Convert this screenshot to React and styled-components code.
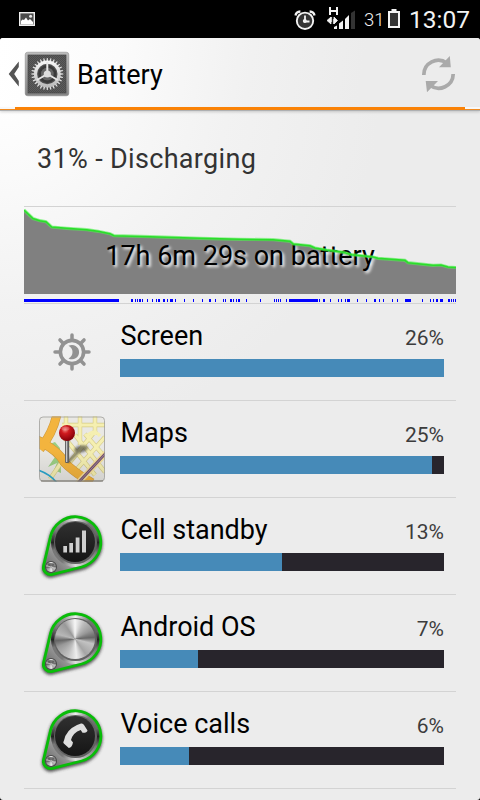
import React from "react";
import styled, { createGlobalStyle } from "styled-components";

const GlobalStyle = createGlobalStyle`
  html, body { margin: 0; background: #000; }
  body { font-family: Roboto, "Liberation Sans", sans-serif; }
  svg { display: block; flex: none; }
`;

const Phone = styled.div`
  width: 480px;
  height: 800px;
  display: flex;
  flex-direction: column;
  overflow: hidden;
  background: #000;
`;

const StatusBar = styled.header`
  height: 38px;
  flex: none;
  display: flex;
  align-items: center;
  background: #000;
  color: #f3f3f3;
  padding: 0 9px 0 18px;
`;

const StatusIcons = styled.div`
  display: flex;
  align-items: center;
  margin-left: auto;
`;

const BatteryLevel = styled.span`
  font-size: 18.5px;
  line-height: 38px;
  font-weight: 300;
  width: 24px;
  margin-left: 9px;
  padding-top: 1px;
  box-sizing: border-box;
`;

const Clock = styled.time`
  font-size: 24.5px;
  line-height: 38px;
  width: 62px;
  margin-left: 9px;
  padding-top: 1px;
  box-sizing: border-box;
`;

const Screen = styled.div`
  flex: 1;
  display: flex;
  flex-direction: column;
  border-radius: 3px;
  overflow: hidden;
  background: radial-gradient(ellipse 380px 360px at 0 50px, #ffffff 0%, #fafafa 25%, #f2f2f2 60%, #ececec 100%);
`;

const ActionBar = styled.div`
  height: 69px;
  box-sizing: border-box;
  flex: none;
  display: flex;
  align-items: center;
  background: linear-gradient(98deg, #ffffff 0%, #fbfbfb 25%, #f1f1f1 52%, #ececec 75%);
  padding: 3px 24px 0 8px;
`;

const Title = styled.h1`
  margin: 2px 0 0 7px;
  font-size: 27px;
  line-height: 36px;
  font-weight: 400;
  color: #000;
  flex: 1;
`;

const Accent = styled.div`
  height: 3px;
  flex: none;
  box-sizing: border-box;
  padding: 0 15px;
  background: linear-gradient(#f8f8f8 0 2px, #f08a20 2px 3px);
  box-shadow: 0 1px 0 #aeb0b2, 0 2px 3px rgba(0, 0, 0, 0.18);
`;

const AccentLine = styled.div`
  height: 3px;
  background: #fa8206;
`;

const Content = styled.main`
  padding: 0 24px;
`;

const Summary = styled.div`
  height: 96px;
  box-sizing: border-box;
  border-bottom: 1px solid #d3d3d3;
  padding: 30px 0 0 13px;
  margin-top: 1px;
  font-size: 27px;
  letter-spacing: 0.33px;
  line-height: 36px;
  color: #333;
`;

const ChartPanel = styled.div`
  position: relative;
  height: 97px;
  box-sizing: border-box;
  border-bottom: 1px solid #d3d3d3;
`;

const ChartLayer = styled.svg`
  position: absolute;
  left: 0;
  top: 0;
`;

const ChartLabel = styled.div`
  position: absolute;
  left: 0;
  right: 0;
  top: 31px;
  text-align: center;
  font-size: 27px;
  line-height: 36px;
  color: #000;
  text-shadow: 2px 2px 3px #fff;
`;

const Row = styled.div`
  height: 97px;
  box-sizing: border-box;
  display: flex;
  padding: 7px 12px 0 6px;
  border-bottom: 1px solid #d3d3d3;
`;

const RowBody = styled.div`
  flex: 1;
  padding-top: 7px;
`;

const RowHeader = styled.div`
  display: flex;
  justify-content: space-between;
  align-items: baseline;
  height: 41px;
`;

const RowName = styled.span`
  font-size: 27px;
  line-height: 36px;
  padding-left: 0.5px;
  color: #000;
`;

const RowPercent = styled.span`
  font-size: 21px;
  line-height: 28px;
  font-weight: 400;
  color: #3c3c3c;
`;

const Track = styled.div`
  height: 18px;
  background: #28252c;
`;

const Fill = styled.div`
  height: 18px;
  width: ${(p) => p.$width}px;
  background: #468ab8;
`;

const curve =
  "M24 210 L33 218.5 L40 220.7 L46 221.7 L51.7 227 L66.7 228.3 L86.7 229.7 L98 231.3 L110 233.7 L114 235.7 L150 236.7 L200 238.3 L240 239.3 L273 239.7 L290 241.3 L293.3 244 L310 245.7 L315 248 L326.7 250 L343.3 252.3 L351.7 254.7 L373.3 257 L378 258.3 L405 260.3 L408 262.7 L433 265.3 L441 265 L448 267 L456 267.5";

const awake = [
  [24, 95], [131, 2], [135, 1], [137, 1], [139, 2], [142, 1], [147, 1], [152, 1], [156, 1], [158, 2],
  [163, 2], [167, 1], [170, 3], [175, 1], [184, 1], [193, 1], [202, 1], [209, 2], [215, 1], [223, 1],
  [225, 1], [230, 2], [233, 1], [236, 1], [238, 2], [246, 1], [260, 1], [274, 1], [276, 1], [278, 1],
  [280, 1], [286, 1], [289, 29], [319, 1], [323, 2], [330, 1], [338, 1], [341, 1], [345, 1], [347, 3],
  [357, 1], [366, 1], [374, 2], [379, 1], [383, 1], [392, 1], [397, 1], [405, 6], [422, 1], [430, 1],
  [433, 1], [436, 2], [440, 3], [448, 2], [451, 1], [453, 1], [455, 1],
];

function Chart() {
  return (
    <ChartPanel>
      <ChartLayer width="432" height="96" viewBox="24 207 432 96">
        <path d={`${curve} V294 H24 Z`} fill="#808080" />
        {awake.map(([x, w]) => (
          <rect key={x} x={x} y="299" width={w} height="3" fill="#0000ff" shapeRendering="crispEdges" />
        ))}
      </ChartLayer>
      <ChartLabel>17h 6m 29s on battery</ChartLabel>
      <ChartLayer width="432" height="96" viewBox="24 207 432 96">
        <path d={curve} fill="none" stroke="#50f050" strokeOpacity="0.6" strokeWidth="3.2" />
        <path d={curve} fill="none" stroke="#2ade2a" strokeWidth="1.5" />
      </ChartLayer>
    </ChartPanel>
  );
}

const PictureSvg = styled.svg`
  margin-top: 2px;
`;

function PictureIcon() {
  return (
    <PictureSvg width="18" height="16" viewBox="18 12 18 16">
      <rect x="19.7" y="12.7" width="14.6" height="12.6" fill="#4b4b4b" stroke="#f0f0f0" strokeWidth="1.4" />
      <path d="M21 24.5 V21 L22.5 19.5 L24 20 L26 17.5 L28 20.5 L30 19 L33 22 V24.5 Z" fill="#fff" />
      <circle cx="30.6" cy="16.3" r="1.5" fill="#e8e8e8" />
    </PictureSvg>
  );
}

function AlarmIcon() {
  return (
    <svg width="22" height="22" viewBox="294 9 22 22">
      <path d="M295.5 15.5 Q296 11.8 300.4 11.5 M309.6 11.5 Q314 11.8 314.5 15.5" stroke="#f3f3f3" strokeWidth="2.3" fill="none" />
      <circle cx="305" cy="20.8" r="8.2" fill="#343434" stroke="#f3f3f3" strokeWidth="1.9" />
      <path d="M305 15.5 V21.5 H309.5" stroke="#f3f3f3" strokeWidth="1.8" fill="none" />
      <circle cx="304.8" cy="21" r="2" fill="#f3f3f3" />
    </svg>
  );
}

const SignalSvg = styled.svg`
  margin-top: -2px;
`;

function SignalIcon() {
  return (
    <SignalSvg width="29" height="24" viewBox="326 6 29 24">
      <path d="M330 7 V15 M337 7 V15 M330 11 H337" stroke="#f3f3f3" strokeWidth="2" fill="none" />
      <path d="M327 20.5 L331 17 V24 Z M337.5 20.5 L334 17 V24 Z M331.6 17 V22 M333.4 19 V24" stroke="#f3f3f3" strokeWidth="0.8" fill="#f3f3f3" />
      <path d="M334 29 V27 L337 25.5 V29 Z M339 29 V23.5 L343 20.5 V29 Z M345 29 V19 L349 15 V29 Z" fill="#f3f3f3" />
      <path d="M351 29 V13 L355 10.5 V29 Z" fill="#333" />
    </SignalSvg>
  );
}

function BatteryIcon() {
  return (
    <svg width="12" height="20" viewBox="388 10 12 20">
      <path d="M391.5 10 H396.5 V12 H400 V29 H388 V12 H391.5 Z" fill="#f3f3f3" />
      <rect x="390" y="14" width="8" height="13" fill="#333" />
    </svg>
  );
}

const SettingsSvg = styled.svg`
  margin-left: 5px;
`;

function SettingsIcon() {
  const teeth = Array.from({ length: 28 }, (_, i) => (i * 360) / 28);
  return (
    <SettingsSvg width="46" height="46" viewBox="24 51 46 46">
      <defs>
        <linearGradient id="frame" x1="0" y1="0" x2="0" y2="1">
          <stop offset="0" stopColor="#bcbcbc" />
          <stop offset="1" stopColor="#858585" />
        </linearGradient>
        <linearGradient id="gear" x1="0" y1="0" x2="0" y2="1">
          <stop offset="0" stopColor="#f5f5f5" />
          <stop offset="1" stopColor="#bdbdbd" />
        </linearGradient>
        <pattern id="mesh" width="2" height="2" patternUnits="userSpaceOnUse">
          <rect width="2" height="2" fill="#5c5c5c" />
          <rect width="1" height="1" fill="#4c4c4c" />
          <rect x="1" y="1" width="1" height="1" fill="#4c4c4c" />
        </pattern>
      </defs>
      <rect x="25.2" y="52.2" width="43.6" height="43.6" rx="2.5" fill="url(#frame)" stroke="#808080" strokeWidth="0.5" />
      <rect x="28" y="55" width="38" height="38" fill="url(#mesh)" stroke="#484848" strokeWidth="0.7" />
      <circle cx="47.3" cy="74" r="13" fill="#505050" />
      {teeth.map((a) => (
        <path key={a} d="M46.4 62 L46.8 58 H47.8 L48.2 62 Z" fill="#e0e0e0" transform={`rotate(${a} 47.3 74)`} />
      ))}
      <circle cx="47.3" cy="74" r="11.8" fill="none" stroke="url(#gear)" strokeWidth="3.2" />
      <circle cx="47.3" cy="74" r="7.6" fill="none" stroke="#3a3a3a" strokeWidth="2.6" />
      <circle cx="47.3" cy="74" r="6.3" fill="#666" />
      <path d="M47.3 62 V74 L37 80 M47.3 74 L57.6 80" stroke="#e7e7e7" strokeWidth="2" fill="none" />
      <circle cx="47.3" cy="74" r="3.6" fill="#dedede" />
    </SettingsSvg>
  );
}

function RefreshIcon() {
  return (
    <svg width="36" height="38" viewBox="420 55 36 38">
      <path d="M423.8 75 A14.5 14.5 0 0 1 447 63.2 M453.2 74 A14.5 14.5 0 0 1 430 85.3" fill="none" stroke="#aaa" strokeWidth="3.7" />
      <path d="M449.8 56 L450.8 67.2 H439 Z M425.7 81 H438 L427 92.2 Z" fill="#aaa" />
    </svg>
  );
}

function BrightnessIcon() {
  return (
    <svg width="90" height="88" viewBox="0 0 90 88">
      <g stroke="#929292" fill="none">
        <circle cx="42" cy="41" r="11.6" strokeWidth="3.6" />
        {[0, 45, 90, 135, 180, 225, 270, 315].map((a) => (
          <path key={a} d="M42 28.5 V24" strokeWidth="3.5" strokeLinecap="round" transform={`rotate(${a} 42 41)`} />
        ))}
      </g>
      <path d="M38.5 34.8 A7.2 7.2 0 1 1 38.5 47.5 Q42.5 45 42.5 41 Q42.5 37 38.5 34.8 Z" fill="#929292" />
    </svg>
  );
}

function MapsIcon() {
  return (
    <svg width="90" height="88" viewBox="0 3 90 88">
      <defs>
        <clipPath id="mapClip"><rect x="9" y="11.5" width="66" height="65" rx="4" /></clipPath>
        <radialGradient id="pin" cx="0.38" cy="0.3" r="0.7">
          <stop offset="0" stopColor="#f08078" />
          <stop offset="0.35" stopColor="#cf1a1e" />
          <stop offset="1" stopColor="#850008" />
        </radialGradient>
        <linearGradient id="mapShade" x1="0" y1="0" x2="0" y2="1">
          <stop offset="0.5" stopColor="#000" stopOpacity="0" />
          <stop offset="1" stopColor="#000" stopOpacity="0.1" />
        </linearGradient>
        <filter id="pinShade"><feGaussianBlur stdDeviation="1" /></filter>
      </defs>
      <g clipPath="url(#mapClip)" fill="none">
        <rect x="9" y="11" width="66" height="66" fill="#e9e8e4" />
        <path d="M17 40 L25 37 L30 43 L31 68 L24 65 L27 58 L18 62 L25 52 Z" fill="#9bce84" />
        <g stroke="#d4ca87" strokeWidth="4.4">
          <path d="M32 20 H75 M36 11 V36 M50 11 V40 M65 11 V30 M34 32 L65 70 M45 30 L75 67 M55 29 L75 52 M40 57 L66 25 M47 64 L75 32 M20 74 L35 52" />
        </g>
        <g stroke="#f5efb1" strokeWidth="3.2">
          <path d="M32 20 H75 M36 11 V36 M50 11 V40 M65 11 V30 M34 32 L65 70 M45 30 L75 67 M55 29 L75 52 M40 57 L66 25 M47 64 L75 32 M20 74 L35 52" />
          <path d="M57 31 Q64 23 70 31" />
        </g>
        <path d="M27 9 Q23 28 10 44 M5 34 Q28 45 34 57 Q42 66 62 78" stroke="#cf9a3d" strokeWidth="9.2" />
        <path d="M27 9 Q23 28 10 44 M5 34 Q28 45 34 57 Q42 66 62 78" stroke="#f3b43e" strokeWidth="8" />
        <path d="M47 79 L76 48" stroke="#f5df9b" strokeWidth="6" />
        <path d="M47 79 L76 48" stroke="#74506f" strokeWidth="2.8" />
        <path d="M47 79 L76 48" stroke="#ad98a5" strokeWidth="0.8" />
        <path d="M8 65 Q20 69 27 78" stroke="#2aa7cf" strokeWidth="1.8" />
        <rect x="9" y="11" width="66" height="66" fill="url(#mapShade)" />
      </g>
      <rect x="9.5" y="12" width="65" height="64" rx="3.5" fill="none" stroke="#9b9b98" strokeOpacity="0.75" />
      <path d="M11 76 H73" stroke="#77736b" strokeWidth="1" />
      <g filter="url(#pinShade)" opacity="0.55">
        <path d="M38 57 L49 46" stroke="#222" strokeWidth="3" />
        <ellipse cx="51" cy="44" rx="7" ry="3.5" fill="#222" transform="rotate(-12 51 44)" />
      </g>
      <rect x="35" y="34" width="4.2" height="24" rx="1.5" fill="#5e5e5e" />
      <path d="M36.6 35 V57" stroke="#c8c8c8" strokeWidth="1.4" />
      <circle cx="37" cy="28" r="8" fill="url(#pin)" />
      <ellipse cx="35.5" cy="23.5" rx="4" ry="2" fill="#fff" opacity="0.2" />
    </svg>
  );
}

const KnobBox = styled.div`
  position: relative;
  width: 90px;
  height: 88px;
  flex: none;
`;

const KnobLayer = styled.svg`
  position: absolute;
  left: 0;
  top: 0;
`;

const Disc = styled.div`
  position: absolute;
  left: ${(p) => p.$x - p.$r}px;
  top: ${(p) => p.$y - p.$r}px;
  width: ${(p) => p.$r * 2}px;
  height: ${(p) => p.$r * 2}px;
  border-radius: 50%;
  background: ${(p) => p.$fill};
`;

const ring = "conic-gradient(#eee, #777 35deg, #666 70deg, #222 90deg, #777 115deg, #aaa 150deg, #ddd 180deg, #777 215deg, #777 250deg, #222 270deg, #777 300deg, #999 330deg, #eee)";
const brushed = "conic-gradient(#f6f6f6, #bbb 30deg, #999 60deg, #686868 85deg, #c3c3c3 105deg, #a5a5a5 145deg, #ededed 175deg, #c0c0c0 205deg, #999 245deg, #666 265deg, #b7b7b7 285deg, #999 325deg, #f6f6f6)";
const teardrop = "M20.5 31.5 A25.5 25.5 0 1 1 51.6 62 L22.5 69.4 A7.3 7.3 0 0 1 13.6 60.6 Z";

function Knob({ kind }) {
  return (
    <KnobBox>
      <KnobLayer width="90" height="88" viewBox="0 0 90 88">
        <defs>
          <filter id="knobShade" x="-20%" y="-20%" width="140%" height="140%"><feGaussianBlur stdDeviation="1.8" /></filter>
          <linearGradient id="plate" x1="1" y1="0" x2="0" y2="1">
            <stop offset="0" stopColor="#888" />
            <stop offset="0.7" stopColor="#999" />
            <stop offset="1" stopColor="#555" />
          </linearGradient>
        </defs>
        <path d={teardrop} transform="translate(0 1.5)" fill="#333" stroke="#333" strokeWidth="3.5" opacity="0.8" filter="url(#knobShade)" />
        <path d={teardrop} fill="url(#plate)" />
      </KnobLayer>
      <Disc $x={45.3} $y={37.3} $r={24.5} $fill={ring} />
      <Disc $x={45.3} $y={37.3} $r={21.3} $fill="#626262" />
      <Disc $x={45.3} $y={37.3} $r={20.2} $fill={kind === "plain" ? brushed : "linear-gradient(#303030, #151515)"} />
      <Disc $x={20.9} $y={62} $r={6.4} $fill="#4a4a4a" />
      <Disc $x={20.9} $y={62} $r={5.2} $fill={brushed} />
      <KnobLayer width="90" height="88" viewBox="0 0 90 88">
        <path d={teardrop} fill="none" stroke="#08bd08" strokeWidth="2.8" />
        <ellipse cx="20.9" cy="59.5" rx="3.6" ry="1.5" fill="#444" opacity="0.7" />
        {kind === "signal" && (
          <path d="M33.3 41 H37 V47.5 H33.3 Z M39.3 38 H43 V47.5 H39.3 Z M45.7 32.5 H49.5 V47.5 H45.7 Z M52 25.5 H56 V47.5 H52 Z" fill="#cfcfcf" />
        )}
        {kind === "phone" && (
          <path d="M34 41.5 Q36 31 47 26 L51 24.5 Q53 24 54 26 L57.5 31.5 Q57 34 52.5 33.8 L50.7 31 Q43 33.5 41 41 L43 43.5 Q42 48.5 38.8 49 L33.8 44.5 Q32.6 43.5 34 41.5 Z" fill="#dedede" />
        )}
      </KnobLayer>
    </KnobBox>
  );
}

const items = [
  { name: "Screen", percent: "26%", width: 324, icon: <BrightnessIcon /> },
  { name: "Maps", percent: "25%", width: 312, icon: <MapsIcon /> },
  { name: "Cell standby", percent: "13%", width: 162, icon: <Knob kind="signal" /> },
  { name: "Android OS", percent: "7%", width: 78, icon: <Knob kind="plain" /> },
  { name: "Voice calls", percent: "6%", width: 69, icon: <Knob kind="phone" /> },
];

const AlarmSlot = styled.div`
  margin: 2px 10px 0 0;
`;

export default function App() {
  return (
    <Phone>
      <GlobalStyle />
      <StatusBar>
        <PictureIcon />
        <StatusIcons>
          <AlarmSlot><AlarmIcon /></AlarmSlot>
          <SignalIcon />
          <BatteryLevel>31</BatteryLevel>
          <BatteryIcon />
          <Clock>13:07</Clock>
        </StatusIcons>
      </StatusBar>
      <Screen>
        <ActionBar>
          <svg width="11" height="26" viewBox="8 60 11 26">
            <path d="M18.8 60.5 V66 L14.2 73 L18.8 80 V85.5 L8.7 73 Z" fill="#555" />
          </svg>
          <SettingsIcon />
          <Title>Battery</Title>
          <RefreshIcon />
        </ActionBar>
        <Accent><AccentLine /></Accent>
        <Content>
          <Summary>31% - Discharging</Summary>
          <Chart />
          {items.map((item) => (
            <Row key={item.name}>
              {item.icon}
              <RowBody>
                <RowHeader>
                  <RowName>{item.name}</RowName>
                  <RowPercent>{item.percent}</RowPercent>
                </RowHeader>
                <Track><Fill $width={item.width} /></Track>
              </RowBody>
            </Row>
          ))}
        </Content>
      </Screen>
    </Phone>
  );
}
